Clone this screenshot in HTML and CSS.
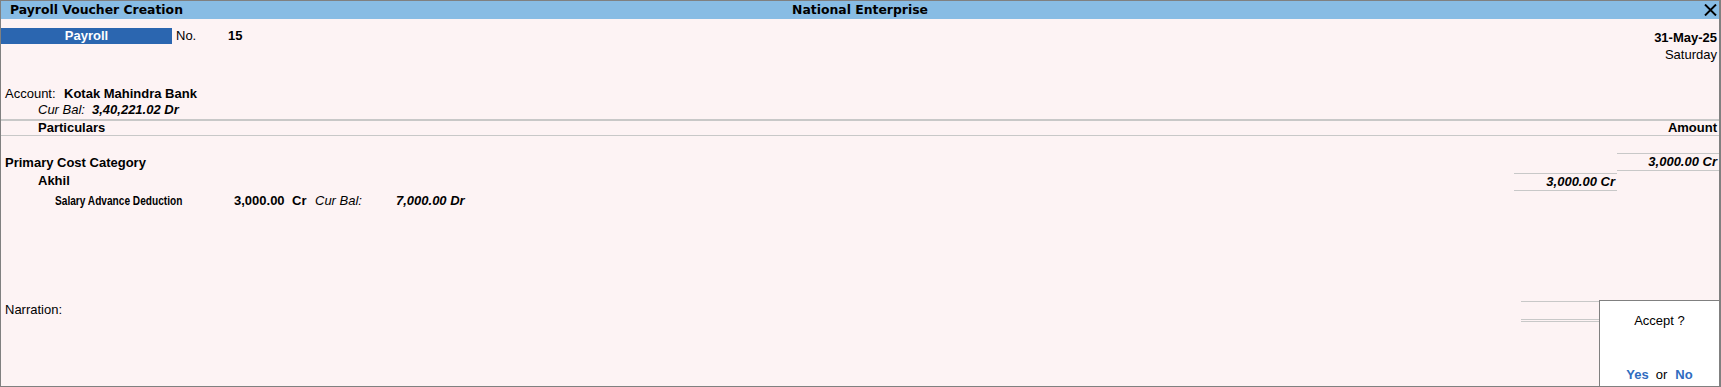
FILE: index.html
```html
<!DOCTYPE html>
<html lang="en">

<head>
  <meta charset="UTF-8">
  <meta name="viewport" content="width=device-width, initial-scale=1.0">
  <title>Payroll Voucher Creation</title>
  <link rel="stylesheet" href="styles.css">
</head>

<body>
  <div class="window">
    <div class="titlebar">
      <span class="title">Payroll Voucher Creation</span>
      <span class="company">National Enterprise</span>
      <span class="close">
        <svg width="13" height="12" viewBox="0 0 13 12">
          <path d="M1 0.5 L12 11.5 M12 0.5 L1 11.5" stroke="#000" stroke-width="1.9" fill="none" />
        </svg>
      </span>
    </div>

    <div class="voucher">
      <div class="voucher-head">
        <div class="voucher-type">
          <span class="type-badge">Payroll</span>
          <span class="no-label">No.</span>
          <span class="no-value">15</span>
        </div>
        <div class="voucher-date">
          <div class="date">31-May-25</div>
          <div class="day">Saturday</div>
        </div>
      </div>

      <div class="account">
        <div class="account-line">
          <span class="account-label">Account:</span>
          <span class="account-name">Kotak Mahindra Bank</span>
        </div>
        <div class="account-line balance-line">
          <span class="bal-label">Cur Bal:</span>
          <span class="bal-value">3,40,221.02 Dr</span>
        </div>
      </div>

      <div class="columns-head">
        <span>Particulars</span>
        <span>Amount</span>
      </div>

      <div class="entries">
        <div class="entry-row category-row">
          <span class="entry-name">Primary Cost Category</span>
          <span class="amount col-total">3,000.00 Cr</span>
        </div>
        <div class="entry-row employee-row">
          <span class="entry-name">Akhil</span>
          <span class="amount col-sub">3,000.00 Cr</span>
          <span class="col-blank"></span>
        </div>
        <div class="pay-head-row">
          <span class="pay-head"><span class="narrow">Salary Advance Deduction</span></span>
          <span class="pay-amount">3,000.00</span>
          <span class="pay-crdr">Cr</span>
          <span class="pay-bal-label">Cur Bal:</span>
          <span class="pay-bal">7,000.00 Dr</span>
        </div>
      </div>

      <div class="narration-row">
        <span class="narration-label">Narration:</span>
        <span class="total-lines"></span>
      </div>
    </div>

    <div class="accept-box">
      <div>Accept ?</div>
      <div><span class="choice">Yes</span><span class="or">or</span><span class="choice">No</span></div>
    </div>
  </div>
</body>

</html>
```

FILE: styles.css
```css
* {
  box-sizing: border-box;
}

body {
  margin: 0;
  font-family: "Liberation Sans", Arial, sans-serif;
  font-size: 13px;
  color: #000;
}

.window {
  position: relative;
  width: 1721px;
  height: 387px;
  border: 1px solid #808080;
  border-right-width: 2px;
  background: #fdf3f4;
}

/* title bar */
.titlebar {
  display: grid;
  grid-template-columns: 1fr auto 1fr;
  align-items: center;
  height: 18px;
  background: #88bce4;
  font-family: "DejaVu Sans", sans-serif;
  font-weight: bold;
  font-size: 12.4px;
  line-height: 16px;
}

.title {
  padding-left: 9px;
}

.close {
  justify-self: end;
  display: flex;
  margin-right: 2px;
}

/* voucher header */
.voucher-head {
  display: flex;
  justify-content: space-between;
  align-items: flex-start;
  margin-top: 9px;
}

.voucher-type {
  display: flex;
  line-height: 16px;
}

.type-badge {
  width: 171px;
  height: 16px;
  background: #2b66b0;
  color: #fff;
  font-weight: bold;
  text-align: center;
}

.no-label {
  width: 52px;
  margin-left: 4px;
}

.no-value {
  font-weight: bold;
}

.voucher-date {
  padding: 1px 2px 0 0;
  text-align: right;
  line-height: 17px;
}

.date {
  font-weight: bold;
}

/* account */
.account {
  margin-top: 23px;
  padding-left: 4px;
  line-height: 16px;
}

.account-line {
  display: flex;
}

.account-label {
  width: 59px;
}

.account-name {
  font-weight: bold;
}

.balance-line {
  padding-left: 33px;
  font-style: italic;
}

.bal-label {
  width: 54px;
}

.bal-value {
  font-weight: bold;
}

.columns-head {
  display: flex;
  justify-content: space-between;
  margin-top: 1px;
  padding: 0 2px 0 37px;
  border-top: 2px solid #c8c8c8;
  border-bottom: 1px solid #c8c8c8;
  line-height: 14px;
  font-weight: bold;
}

/* entries */
.entries {
  padding: 17px 0 0 4px;
}

.entry-row {
  display: flex;
  line-height: 16px;
  font-weight: bold;
}

.entry-name {
  flex: 1;
}

.category-row .entry-name {
  padding-top: 2px;
}

.employee-row {
  margin-top: 2px;
}

.employee-row .entry-name {
  padding-left: 33px;
}

.amount {
  padding-right: 2px;
  border-top: 1px solid #c8c8c8;
  border-bottom: 1px solid #c8c8c8;
  text-align: right;
  font-style: italic;
}

.col-total {
  width: 102px;
}

.col-sub {
  width: 103px;
}

.col-blank {
  width: 102px;
}

.pay-head-row {
  display: flex;
  margin-top: 2px;
  line-height: 16px;
  font-weight: bold;
}

.pay-head {
  width: 229px;
  padding-left: 50px;
  font-size: 12.5px;
  white-space: nowrap;
}

.narrow {
  display: inline-block;
  transform: scaleX(0.81);
  transform-origin: left center;
}

.pay-amount {
  width: 58px;
}

.pay-crdr {
  width: 23px;
}

.pay-bal-label {
  width: 81px;
  font-style: italic;
  font-weight: normal;
}

.pay-bal {
  font-style: italic;
}

/* narration */
.narration-row {
  display: flex;
  justify-content: space-between;
  margin-top: 92px;
}

.narration-label {
  padding: 1px 0 0 4px;
  line-height: 16px;
}

.total-lines {
  width: 198px;
  height: 21px;
  border-top: 1px solid #c8c8c8;
  border-bottom: 3px double #c8c8c8;
}

/* accept prompt */
.accept-box {
  position: absolute;
  right: 0;
  bottom: 0;
  width: 120px;
  height: 86px;
  padding: 12px 0 3px;
  display: flex;
  flex-direction: column;
  justify-content: space-between;
  align-items: center;
  border-top: 1px solid #808080;
  border-left: 1px solid #808080;
  background: #fff;
  line-height: 16px;
}

.choice {
  color: #2f6cbf;
  font-weight: bold;
}

.or {
  margin: 0 8px 0 7px;
}
```
